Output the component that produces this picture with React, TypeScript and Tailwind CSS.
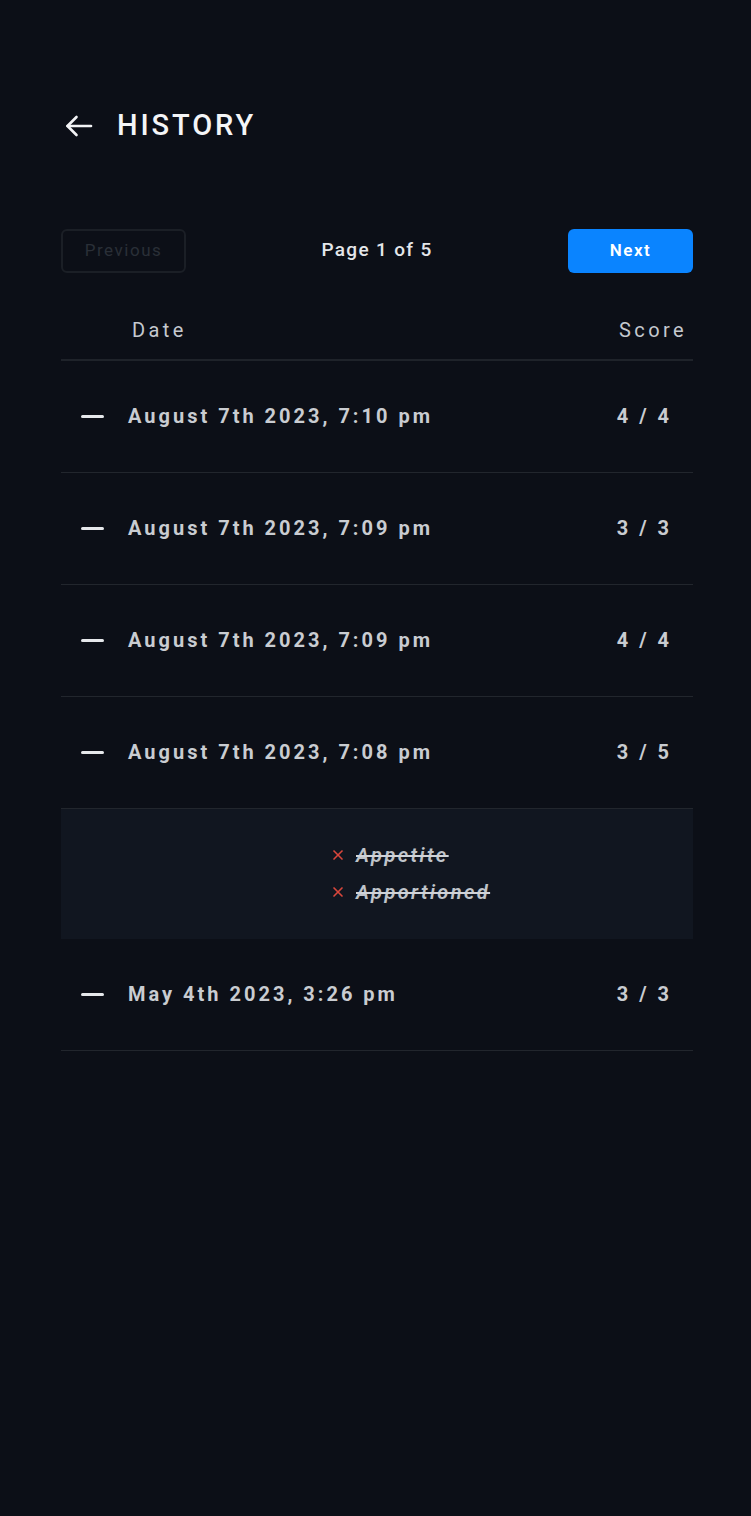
import { X } from "lucide-react";

type Attempt = {
  date: string;
  score: string;
  missed?: string[];
};

const attempts: Attempt[] = [
  { date: "August 7th 2023, 7:10 pm", score: "4 / 4" },
  { date: "August 7th 2023, 7:09 pm", score: "3 / 3" },
  { date: "August 7th 2023, 7:09 pm", score: "4 / 4" },
  { date: "August 7th 2023, 7:08 pm", score: "3 / 5", missed: ["Appetite", "Apportioned"] },
  { date: "May 4th 2023, 3:26 pm", score: "3 / 3" },
];

function Row({ item }: { item: Attempt }) {
  return (
    <>
      <div className="flex h-[112px] items-center border-b border-[#22262d] pl-5 pr-[21px]">
        <span className="h-[3px] w-[23px] rounded-full bg-[#e6e8eb]" />
        <span className="ml-6 text-[20px] font-bold tracking-[0.15em] text-[#c9ccd1]">{item.date}</span>
        <span className="ml-auto text-[20px] font-bold tracking-[0.15em] text-[#c9ccd1]">{item.score}</span>
      </div>
      {item.missed && (
        <div className="flex h-[130px] flex-col items-start justify-center gap-[7px] bg-[#111620] pl-[269px]">
          {item.missed.map((word) => (
            <div key={word} className="flex items-center gap-[10px]">
              <X className="h-[16px] w-[16px] text-[#d9473c]" strokeWidth={2.5} />
              <span className="text-[20px] font-semibold italic tracking-[0.12em] text-[#bfc3c9] line-through decoration-[#d0d3d8]">
                {word}
              </span>
            </div>
          ))}
        </div>
      )}
    </>
  );
}

export default function App() {
  return (
    <div
      className="min-h-[1516px] w-full bg-[#0c0f17] text-white"
      style={{ fontFamily: "Roboto, 'Liberation Sans', sans-serif" }}
    >
      <div className="ml-[61px] w-[632px] pt-[104px]">
        <div className="flex items-center">
          <svg
            className="ml-[4px] h-[24px] w-[28px] text-[#f2f3f5]"
            viewBox="0 0 28 24"
            fill="none"
            stroke="currentColor"
            strokeWidth={2.6}
            strokeLinecap="round"
            strokeLinejoin="round"
          >
            <path d="M26 12H2.5" />
            <path d="M11.5 3 2.5 12l9 9" />
          </svg>
          <h1 className="ml-[24px] text-[29px] font-medium tracking-[0.1em] text-[#f4f5f7]">HISTORY</h1>
        </div>

        <div className="mt-[81px] flex items-center justify-between">
          <button
            type="button"
            disabled
            className="h-[44px] w-[125px] rounded-md border-2 border-[#1b1f26] text-[17px] tracking-[0.09em] text-[#2a2f37]"
          >
            Previous
          </button>
          <span className="text-[19px] font-medium tracking-[0.07em] text-[#e4e6ea]">Page 1 of 5</span>
          <button
            type="button"
            className="h-[44px] w-[125px] rounded-md bg-[#0a84ff] text-[17px] font-semibold tracking-[0.09em] text-white"
          >
            Next
          </button>
        </div>

        <div className="mt-[20px] flex h-[68px] items-end border-b-2 border-[#1f232a] pb-[14px] pl-[71px] pr-[6px]">
          <span className="text-[20px] tracking-[0.17em] text-[#c5c9cf]">Date</span>
          <span className="ml-auto text-[20px] tracking-[0.17em] text-[#c5c9cf]">Score</span>
        </div>

        <div>
          {attempts.map((item, i) => (
            <Row key={i} item={item} />
          ))}
        </div>
      </div>
    </div>
  );
}
